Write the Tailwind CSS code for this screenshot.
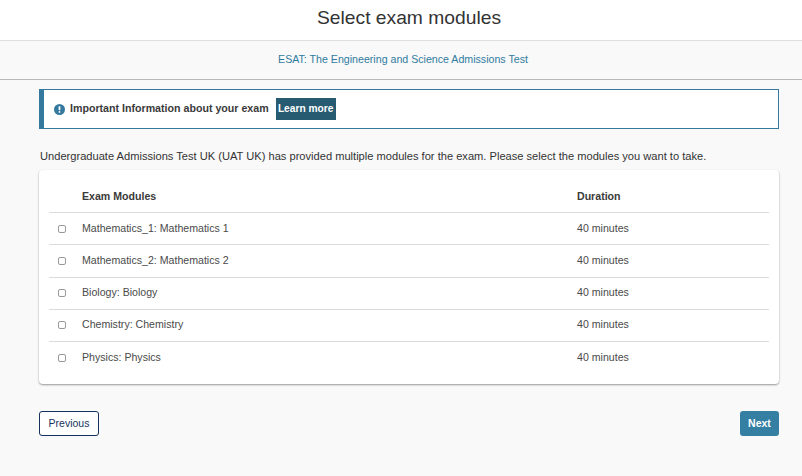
<!doctype html>
<html lang="en">
<head>
<meta charset="UTF-8"/>
<title>Select exam modules</title>
<script src="https://cdn.jsdelivr.net/npm/@tailwindcss/browser@4"></script>
</head>
<body class="h-[476px] overflow-hidden bg-[#f9f9f9] font-['Liberation_Sans',Arial,sans-serif] text-[#333]">

<div class="h-[40px] bg-white flex items-start justify-center border-b border-[#e0e0e0] box-content pl-[16px]">
  <h1 class="text-[19.25px] leading-[36px] text-[#333]">Select exam modules</h1>
</div>
<div class="h-[38px] flex items-center justify-center border-b border-[#b8b8b8] box-content pl-[4px]">
  <a class="text-[10.63px] text-[#2f7ba0]">ESAT: The Engineering and Science Admissions Test</a>
</div>

<div class="pl-[39px] pr-[23px] pt-[9px]">
  <div class="h-[40px] bg-white border border-[#357a9e] border-l-[5px] flex items-center pl-[10px] gap-[5px]">
    <svg class="w-[11px] h-[11px]" viewBox="0 0 11 11"><circle cx="5.5" cy="5.5" r="5.5" fill="#357a9e"/><rect x="4.6" y="2.2" width="1.8" height="4" rx=".6" fill="#fff"/><rect x="4.6" y="7" width="1.8" height="1.8" rx=".9" fill="#fff"/></svg>
    <b class="text-[10.65px] font-bold text-[#3a3a3a]">Important Information about your exam</b>
    <span class="ml-[2px] h-[22px] w-[60px] flex items-center justify-center bg-[#265b72] text-white text-[10.2px] font-bold">Learn more</span>
  </div>

  <p class="mt-[20px] ml-[1px] text-[11.12px] leading-[14px] text-[#333]">Undergraduate Admissions Test UK (UAT UK) has provided multiple modules for the exam. Please select the modules you want to take.</p>

  <div class="mt-[7px] h-[214px] bg-white rounded-[4px] shadow-[0_1px_2px_rgba(0,0,0,0.4)] px-[10px]">
    <div class="h-[43px] flex items-end pb-[10px] border-b border-[#dcdcdc] text-[10.6px] font-bold text-[#3a3a3a] [&>span]:relative [&>span]:top-[3px]">
      <span class="ml-[33px] w-[495px]">Exam Modules</span><span>Duration</span>
    </div>
    <div class="h-[32.25px] flex items-center border-b border-[#dcdcdc] text-[10.6px] text-[#4a4a4a]">
      <input type="checkbox" class="appearance-none ml-[9px] w-[8px] h-[8px] rounded-[2px] border border-[#999] bg-white"/>
      <span class="ml-[16px] w-[495px]">Mathematics_1: Mathematics 1</span><span>40 minutes</span>
    </div>
    <div class="h-[32.25px] flex items-center border-b border-[#dcdcdc] text-[10.6px] text-[#4a4a4a]">
      <input type="checkbox" class="appearance-none ml-[9px] w-[8px] h-[8px] rounded-[2px] border border-[#999] bg-white"/>
      <span class="ml-[16px] w-[495px]">Mathematics_2: Mathematics 2</span><span>40 minutes</span>
    </div>
    <div class="h-[32.25px] flex items-center border-b border-[#dcdcdc] text-[10.6px] text-[#4a4a4a]">
      <input type="checkbox" class="appearance-none ml-[9px] w-[8px] h-[8px] rounded-[2px] border border-[#999] bg-white"/>
      <span class="ml-[16px] w-[495px]">Biology: Biology</span><span>40 minutes</span>
    </div>
    <div class="h-[32.25px] flex items-center border-b border-[#dcdcdc] text-[10.6px] text-[#4a4a4a]">
      <input type="checkbox" class="appearance-none ml-[9px] w-[8px] h-[8px] rounded-[2px] border border-[#999] bg-white"/>
      <span class="ml-[16px] w-[495px]">Chemistry: Chemistry</span><span>40 minutes</span>
    </div>
    <div class="h-[32.25px] flex items-center text-[10.6px] text-[#4a4a4a]">
      <input type="checkbox" class="appearance-none ml-[9px] w-[8px] h-[8px] rounded-[2px] border border-[#999] bg-white"/>
      <span class="ml-[16px] w-[495px]">Physics: Physics</span><span>40 minutes</span>
    </div>
  </div>

  <div class="mt-[27px] flex justify-between">
    <button class="w-[60px] h-[25px] rounded-[3px] border border-[#16325c] bg-white text-[10.5px] text-[#16325c]">Previous</button>
    <button class="w-[39px] h-[25px] rounded-[3px] bg-[#357fa3] text-[10.5px] font-bold text-white">Next</button>
  </div>
</div>
</body>
</html>
